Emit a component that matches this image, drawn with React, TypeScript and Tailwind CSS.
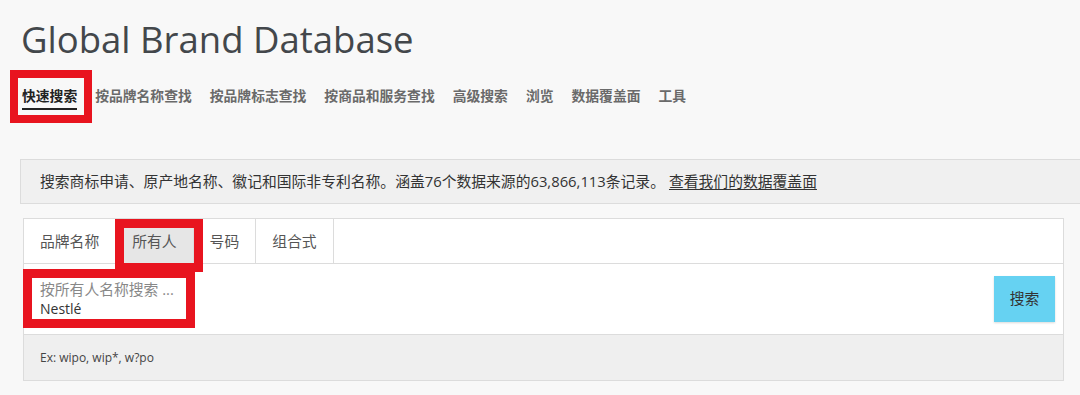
import React from 'react';

const navItems = ['快速搜索', '按品牌名称查找', '按品牌标志查找', '按商品和服务查找', '高级搜索', '浏览', '数据覆盖面', '工具'];
const tabs = ['品牌名称', '所有人', '号码', '组合式'];

function App() {
  return (
    <div className="relative min-h-[395px] overflow-hidden bg-[#f8f8f8] font-['Open_Sans','Noto_Sans_CJK_SC',sans-serif]">
      <h1 className="pl-[21px] pt-[17px] text-[36.5px] leading-[44px] text-[#43474b]">Global Brand Database</h1>

      <nav className="mt-[25px] flex gap-[18px] pl-[22px]">
        {navItems.map((item, i) => (
          <span
            key={item}
            className={
              i === 0
                ? 'border-b-2 border-[#222] pb-[2px] text-[13.8px] font-bold leading-[20px] text-[#222]'
                : 'text-[13.8px] font-bold leading-[20px] text-[#6a6a6a]'
            }
          >
            {item}
          </span>
        ))}
      </nav>

      <div className="mt-[49px] ml-[20px] flex h-[45px] items-center border-y border-l border-[#dcdcdc] bg-[#f0f0f0] pl-[19px] text-[14.8px] text-[#333]">
        <span>搜索商标申请、原产地名称、徽记和国际非专利名称。涵盖76个数据来源的63,866,113条记录。</span>
        <a className="ml-[4px] text-[#333] underline underline-offset-2">查看我们的数据覆盖面</a>
      </div>

      <div className="mt-[14px] ml-[23px] mr-[16px] border border-[#dcdcdc] bg-white">
        <div className="flex h-[45px] border-b border-[#dcdcdc]">
          {tabs.map((t, i) => (
            <div
              key={t}
              className={
                'flex items-center border-r border-[#dcdcdc] px-[16px] text-[14.8px] text-[#555] ' +
                (i === 1 ? 'bg-[#e6e6e6]' : 'bg-white')
              }
            >
              {t}
            </div>
          ))}
        </div>

        <div className="flex h-[70px] items-center justify-between pl-[16px] pr-[8px]">
          <div className="flex flex-col leading-[20px]">
            <span className="text-[14.8px] text-[#888]">按所有人名称搜索 ...</span>
            <span className="text-[14px] text-[#333]">Nestlé</span>
          </div>
          <button className="-mt-[1px] h-[46px] w-[61px] bg-[#66d2f2] text-[14.8px] text-[#333] shadow-[0_1px_2px_rgba(0,0,0,0.15)]">
            搜索
          </button>
        </div>

        <div className="flex h-[46px] items-center border-t border-[#dcdcdc] bg-[#efefef] pl-[16px] text-[12px] text-[#444]">
          Ex: wipo, wip*, w?po
        </div>
      </div>

      {/* annotation boxes */}
      <div className="absolute left-[10px] top-[70px] h-[53px] w-[82px] border-[8px] border-[#e8141f]" />
      <div className="absolute left-[115px] top-[219px] h-[53px] w-[88px] border-[9px] border-[#e8141f]" />
      <div className="absolute left-[23px] top-[269px] h-[59px] w-[172px] border-[9px] border-[#e8141f]" />
    </div>
  );
}

export default App;
